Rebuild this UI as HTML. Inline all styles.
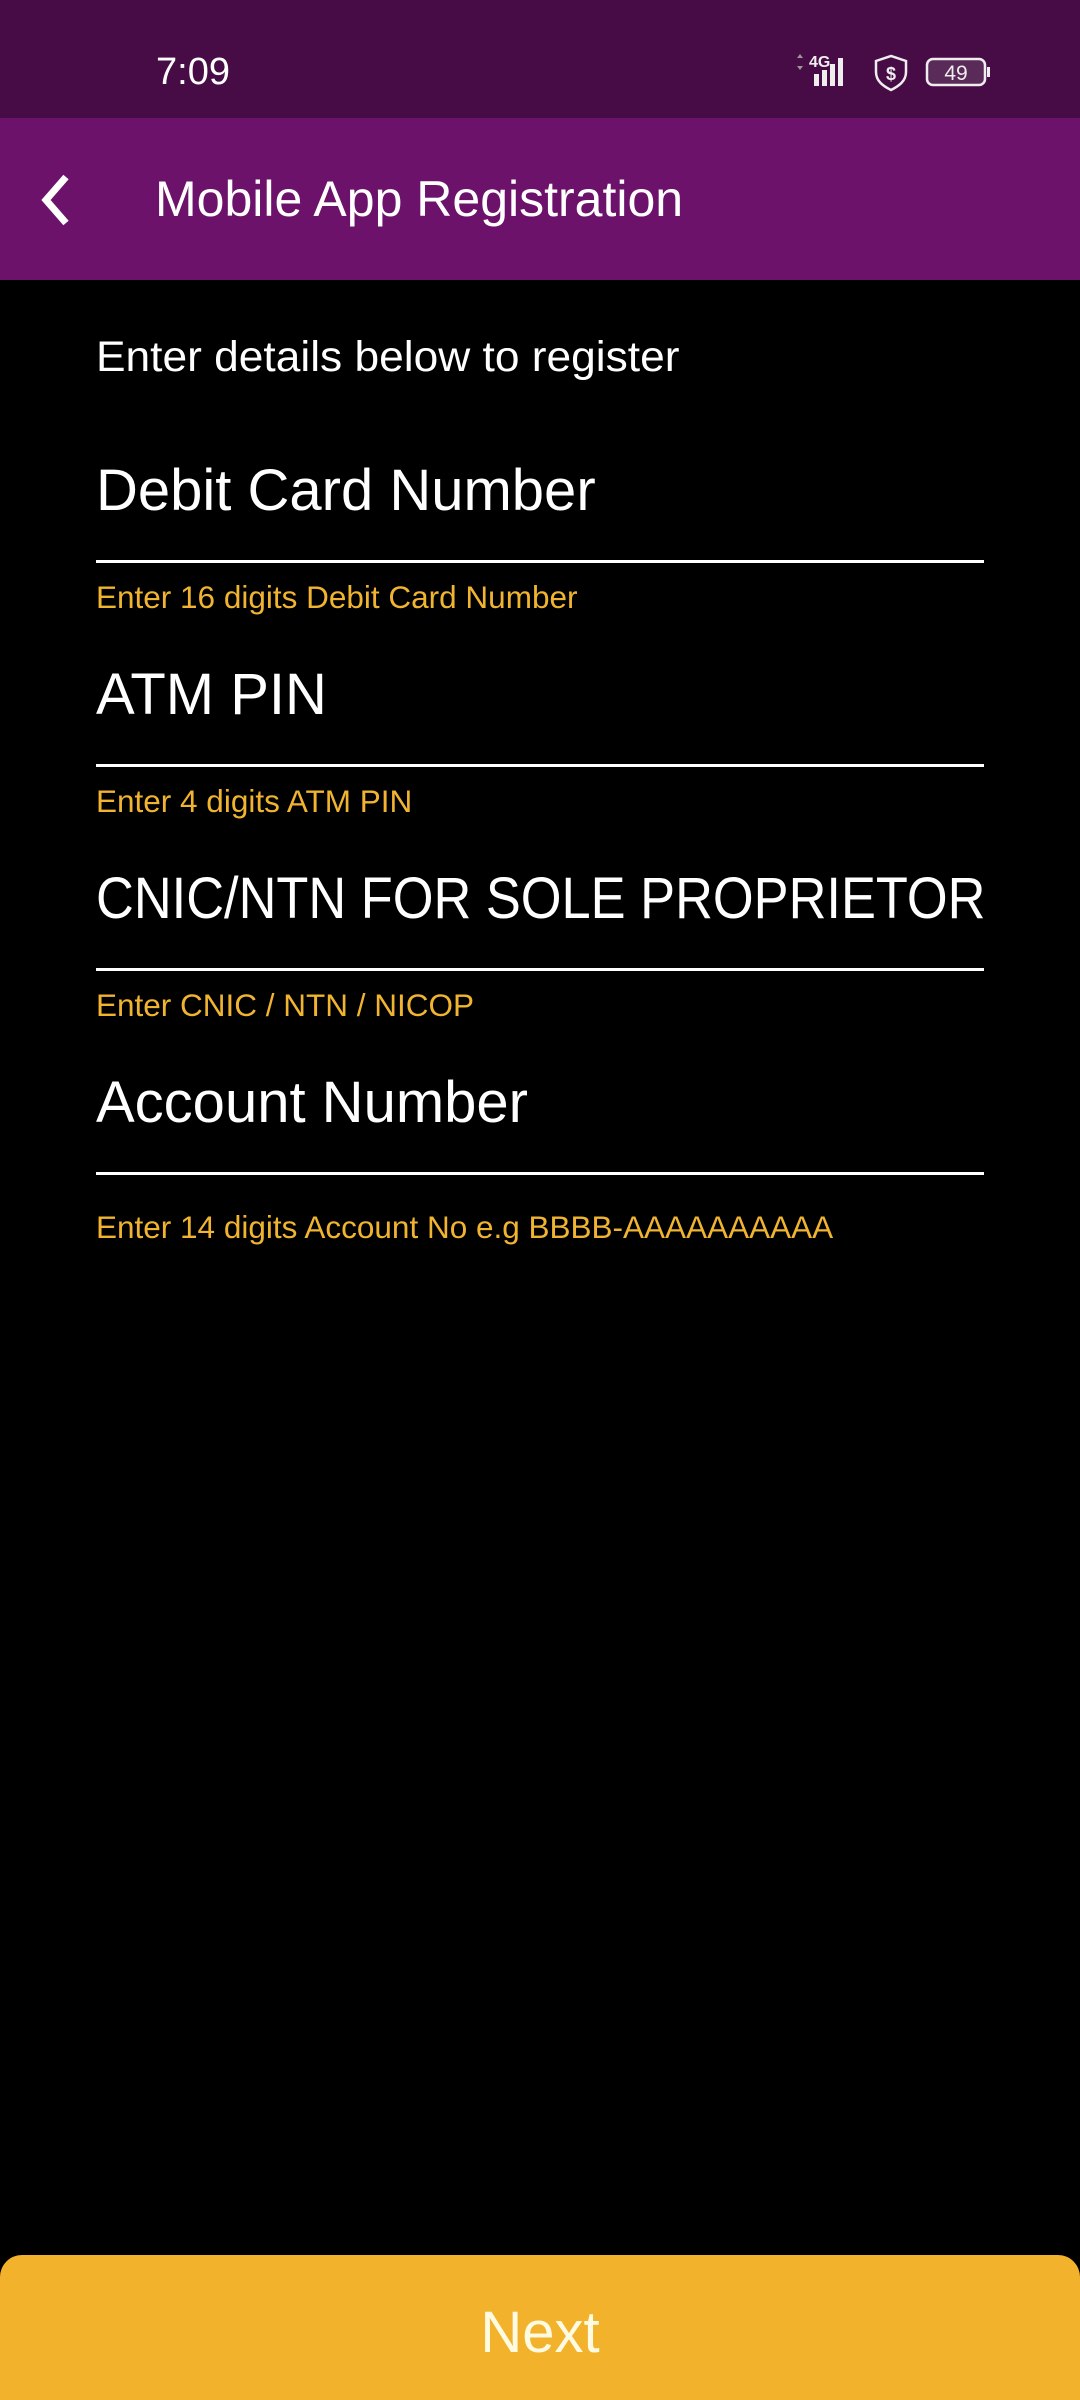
<!DOCTYPE html>
<html><head><meta charset="utf-8"><style>
*{margin:0;padding:0;box-sizing:border-box}
body{width:1080px;height:2400px;background:#000;position:relative;overflow:hidden;font-family:"Liberation Sans",sans-serif;color:#fff}
.sb{position:absolute;left:0;top:0;width:1080px;height:118px;background:#470c45}
.ab{position:absolute;left:0;top:118px;width:1080px;height:162px;background:#6c126b}
.t{position:absolute;white-space:nowrap;line-height:1}
.line{position:absolute;left:96px;width:888px;height:3px;background:#fff}
.lab{position:absolute;left:96px;font-size:58px;white-space:nowrap;line-height:1}
.hint{position:absolute;left:96px;font-size:31.5px;color:#f0b430;white-space:nowrap;line-height:1}
.btn{position:absolute;left:0;top:2255px;width:1080px;height:145px;background:#f3b22b;border-radius:22px 22px 0 0}
</style></head><body>
<div class="sb"></div>
<div class="t" style="left:156px;top:53px;font-size:38px">7:09</div>
<svg style="position:absolute;left:795px;top:50px" width="200" height="44" viewBox="0 0 200 44">
 <text x="14" y="17" font-family="Liberation Sans" font-size="16" fill="#eee" font-weight="bold">4G</text>
 <path d="M5 4l3 4h-6zM5 20l3-4h-6z" fill="#999"/>
 <rect x="19" y="24" width="5" height="12" fill="#eee"/><rect x="27" y="20" width="5" height="16" fill="#eee"/><rect x="35" y="14" width="5" height="22" fill="#eee"/><rect x="43" y="8" width="5" height="28" fill="#eee"/>
 <path d="M96 6l-15 5v11c0 9 7 14 15 18c8-4 15-9 15-18v-11z" fill="none" stroke="#eee" stroke-width="2.5"/>
 <text x="96" y="30" text-anchor="middle" font-family="Liberation Sans" font-size="18" font-weight="bold" fill="#eee">$</text>
 <rect x="132" y="9" width="58" height="26" rx="6" fill="#5a2a58" stroke="#eee" stroke-width="2.5"/>
 <rect x="192" y="17" width="3" height="10" fill="#eee"/>
 <text x="161" y="30" text-anchor="middle" font-family="Liberation Sans" font-size="21" fill="#eee">49</text>
</svg>
<div class="ab"></div>
<svg style="position:absolute;left:36px;top:172px" width="40" height="56" viewBox="0 0 40 56"><path d="M30 5L10 28l20 23" fill="none" stroke="#fff" stroke-width="7"/></svg>
<div class="t" style="left:155px;top:174px;font-size:50px">Mobile App Registration</div>
<div class="t" style="left:96px;top:336px;font-size:43px;transform:scaleX(1.03);transform-origin:left">Enter details below to register</div>
<div class="lab" style="top:462px">Debit Card Number</div>
<div class="line" style="top:560px"></div>
<div class="hint" style="top:582px">Enter 16 digits Debit Card Number</div>
<div class="lab" style="top:666px">ATM PIN</div>
<div class="line" style="top:764px"></div>
<div class="hint" style="top:786px">Enter 4 digits ATM PIN</div>
<div class="lab" style="top:870px;transform:scaleX(0.903);transform-origin:left">CNIC/NTN FOR SOLE PROPRIETOR</div>
<div class="line" style="top:968px"></div>
<div class="hint" style="top:990px">Enter CNIC / NTN / NICOP</div>
<div class="lab" style="top:1074px">Account Number</div>
<div class="line" style="top:1172px"></div>
<div class="hint" style="top:1212px">Enter 14 digits Account No e.g BBBB-AAAAAAAAAA</div>
<div class="btn"></div>
<div class="t" style="left:0;width:1080px;text-align:center;top:2304px;font-size:58px;color:#fffbe2">Next</div>
</body></html>
